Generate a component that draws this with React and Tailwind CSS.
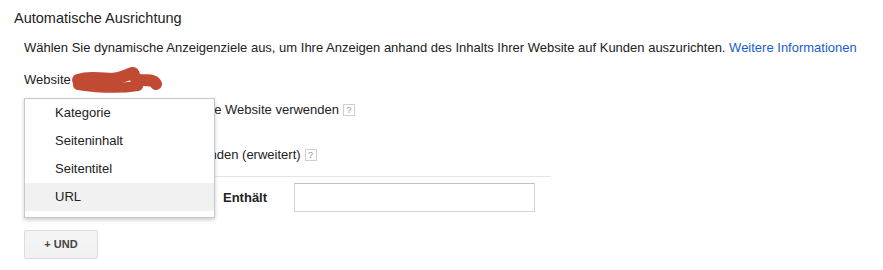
import React from "react";

function Help() {
  return (
    <span className="ml-[4px] inline-flex h-[12px] w-[12px] items-center justify-center border border-[#cfcfcf] bg-white text-[9px] leading-none text-[#999]">
      ?
    </span>
  );
}

export default function App() {
  const items = ["Kategorie", "Seiteninhalt", "Seitentitel", "URL"];
  return (
    <div className="h-[270px] w-[883px] overflow-hidden bg-white font-['Liberation_Sans',Arial,sans-serif] text-[#222]">
      <div className="h-[36px] pl-[14px] text-[14.5px] leading-[36px]">Automatische Ausrichtung</div>
      <div className="pl-[24px]">
        <p className="h-[24px] text-[13px] leading-[24px]">
          Wählen Sie dynamische Anzeigenziele aus, um Ihre Anzeigen anhand des Inhalts Ihrer Website auf Kunden auszurichten.{" "}
          <a className="text-[#1a5ccf]">Weitere Informationen</a>
        </p>
        <div className="relative mt-[8px] h-[24px] text-[13px] leading-[24px]">
          Website
          <svg className="absolute left-[44px] top-[-2px]" width="100" height="28" viewBox="0 0 100 28">
            <path
              d="M10 14 C 20 11, 30 12, 44 13 C 56 12, 60 8, 65 7 C 67 9, 65 13, 72 14 C 80 14, 86 14, 88 18"
              fill="none"
              stroke="#c14a33"
              strokeWidth="12"
              strokeLinecap="round"
              strokeLinejoin="round"
            />
            <path d="M10 19 C 30 22, 50 23, 70 20" fill="none" stroke="#c14a33" strokeWidth="10" strokeLinecap="round" />
          </svg>
        </div>
      </div>
      <div className="pl-[24px]">
        <div className="relative text-[13px]">
          <div className="mt-[4px] flex h-[28px] items-center">
            <span className="ml-[6px] h-[13px] w-[13px] rounded-full border border-[#999]" />
            <span className="ml-[39px]">Ziele für meine gesamte Website verwenden</span>
            <Help />
          </div>
          <div className="mt-[17px] flex h-[28px] items-center">
            <span className="ml-[6px] h-[13px] w-[13px] rounded-full border border-[#999]" />
            <span className="ml-[22px]">Seiten von Regeln verwenden (erweitert)</span>
            <Help />
          </div>
          <div className="mt-[7px] h-px w-[527px] bg-[#e5e5e5]" />
          <div className="mt-[6px] flex h-[29px] items-center">
            <div className="w-[199px]" />
            <div className="w-[71px] font-bold">Enthält</div>
            <div className="h-[29px] w-[241px] border border-[#d5d5d5] border-t-[#c0c0c0] bg-white" />
          </div>
          <button className="mt-[18px] flex h-[29px] w-[74px] items-center justify-center rounded-[2px] border border-[#dcdcdc] bg-gradient-to-b from-[#f5f5f5] to-[#f1f1f1] text-[11px] font-bold text-[#444]">
            + UND
          </button>
          <div className="absolute left-0 top-[2px] w-[191px] border border-[#c8c8c8] bg-white pb-[6px] shadow-[0_2px_4px_rgba(0,0,0,0.2)]">
            {items.map((it) => (
              <div
                key={it}
                className={
                  "flex h-[28px] items-center pl-[30px] " + (it === "URL" ? "bg-[#f1f1f1]" : "")
                }
              >
                {it}
              </div>
            ))}
          </div>
        </div>
      </div>
    </div>
  );
}
